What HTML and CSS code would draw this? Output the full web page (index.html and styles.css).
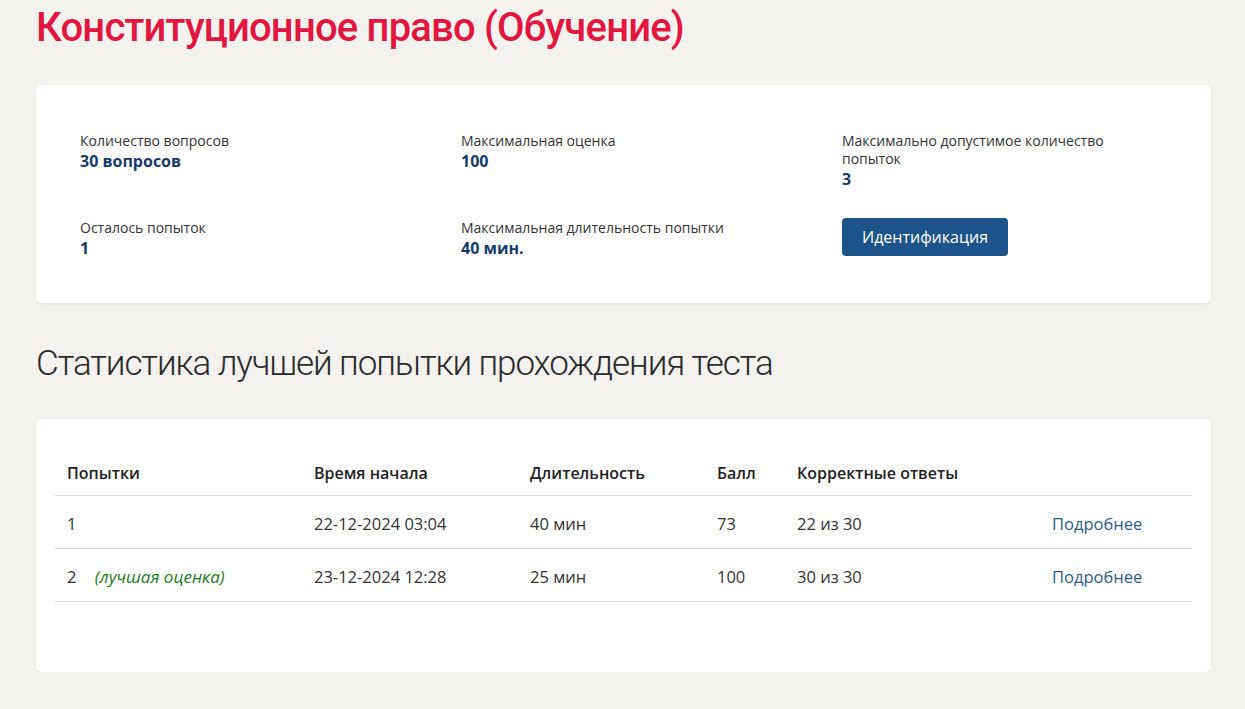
FILE: index.html
```html
<!DOCTYPE html>
<html lang="ru">
<head>
<meta charset="utf-8">
<title>Конституционное право (Обучение)</title>
<link rel="stylesheet" href="styles.css">
</head>
<body>
<main class="page">
  <h1 class="title">Конституционное право (Обучение)</h1>

  <section class="card info">
    <div class="info-grid">
      <div class="info-item">
        <div class="label">Количество вопросов</div>
        <div class="value">30 вопросов</div>
      </div>
      <div class="info-item">
        <div class="label">Максимальная оценка</div>
        <div class="value">100</div>
      </div>
      <div class="info-item">
        <div class="label narrow">Максимально допустимое количество попыток</div>
        <div class="value">3</div>
      </div>
      <div class="info-item">
        <div class="label">Осталось попыток</div>
        <div class="value">1</div>
      </div>
      <div class="info-item">
        <div class="label">Максимальная длительность попытки</div>
        <div class="value">40 мин.</div>
      </div>
      <div class="info-item">
        <button class="btn" type="button">Идентификация</button>
      </div>
    </div>
  </section>

  <h2 class="subtitle">Статистика лучшей попытки прохождения теста</h2>

  <section class="card stats">
    <table class="attempts">
      <thead>
        <tr>
          <th class="c-num">Попытки</th>
          <th class="c-time">Время начала</th>
          <th class="c-dur">Длительность</th>
          <th class="c-score">Балл</th>
          <th class="c-corr">Корректные ответы</th>
          <th class="c-link"></th>
        </tr>
      </thead>
      <tbody>
        <tr>
          <td>1</td>
          <td>22-12-2024 03:04</td>
          <td>40 мин</td>
          <td>73</td>
          <td>22 из 30</td>
          <td><a class="more" href="#">Подробнее</a></td>
        </tr>
        <tr>
          <td>2 <span class="best">(лучшая оценка)</span></td>
          <td>23-12-2024 12:28</td>
          <td>25 мин</td>
          <td>100</td>
          <td>30 из 30</td>
          <td><a class="more" href="#">Подробнее</a></td>
        </tr>
      </tbody>
    </table>
  </section>
</main>
</body>
</html>
```

FILE: styles.css
```css
* { box-sizing: border-box; }

html, body {
  margin: 0;
  padding: 0;
  background: #f3f2ef;
}

body {
  font-family: "Open Sans", "Noto Sans", sans-serif;
  color: #333;
}

.page {
  padding: 0 34px 0 36px;
}

.title {
  margin: 0;
  padding-top: 4px;
  height: 85px;
  font-family: "Roboto", "Liberation Sans", sans-serif;
  font-size: 40px;
  font-weight: 500;
  color: #e2163f;
  letter-spacing: -0.8px;
}

.card {
  background: #fff;
  border-radius: 5px;
  box-shadow: 0 1px 3px rgba(0, 0, 0, 0.08);
}

.info {
  padding: 47px 16px 44px;
}

.info-grid {
  display: grid;
  grid-template-columns: repeat(3, 1fr);
  row-gap: 29px;
}

.info-item {
  padding-left: 28px;
}

.label {
  font-size: 14px;
  line-height: 18px;
  color: #333;
}

.label.narrow {
  max-width: 300px;
}

.value {
  font-size: 16px;
  font-weight: 700;
  line-height: 22px;
  color: #173c6b;
}

.btn {
  display: block;
  margin-top: -1px;
  height: 38px;
  padding: 0 20px;
  border: none;
  border-radius: 4px;
  background: #1c5489;
  color: #fff;
  font-family: inherit;
  font-size: 16px;
}

.subtitle {
  margin: 0;
  height: 116px;
  padding-top: 40px;
  font-family: "Roboto", "Liberation Sans", sans-serif;
  font-size: 35px;
  font-weight: 300;
  letter-spacing: -1.1px;
  color: #2b2b2b;
}

.stats {
  padding: 38px 19px 69px;
  height: 253px;
}

.attempts {
  width: 100%;
  border-collapse: collapse;
  font-size: 16px;
}

.attempts th,
.attempts td {
  text-align: left;
  padding: 0 12px;
  border-bottom: 1px solid #dedede;
  height: 53px;
}

.attempts td {
  color: #333;
  font-size: 16.5px;
  padding-top: 4px;
}

.attempts th {
  font-weight: 600;
  height: 38px;
  padding-bottom: 5px;
  color: #222;
}

.c-num { width: 247px; }
.c-time { width: 216px; }
.c-dur { width: 187px; }
.c-score { width: 80px; }
.c-corr { width: 255px; }

.best {
  margin-left: 14px;
  color: #1e7b1e;
  font-style: italic;
  font-size: 17px;
}

.more {
  color: #2a5c8a;
  text-decoration: none;
}
```
